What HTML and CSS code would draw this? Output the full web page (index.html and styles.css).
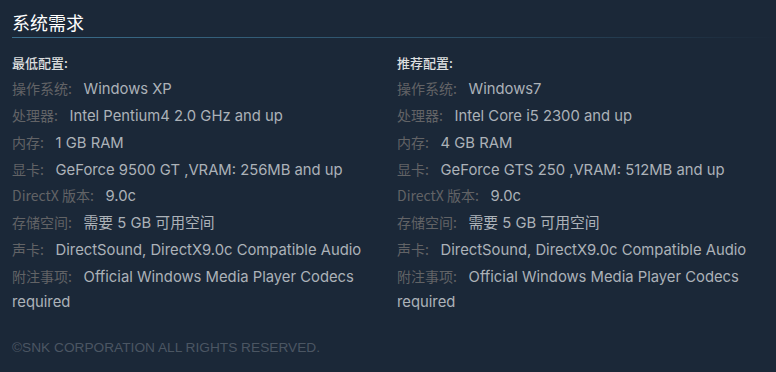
FILE: index.html
```html
<!DOCTYPE html>
<html lang="zh-CN">
<head>
<meta charset="utf-8">
<link rel="stylesheet" href="styles.css">
</head>
<body>
<div class="page">
  <h2 class="title">系统需求</h2>
  <div class="sysreq">
    <div class="col">
      <ul class="req-list">
        <li class="head">最低配置:</li>
        <li><span class="lbl">操作系统:</span> Windows XP</li>
        <li><span class="lbl">处理器:</span> Intel Pentium4 2.0 GHz and up</li>
        <li><span class="lbl">内存:</span> 1 GB RAM</li>
        <li><span class="lbl">显卡:</span> GeForce 9500 GT ,VRAM: 256MB and up</li>
        <li><span class="lbl">DirectX 版本:</span> 9.0c</li>
        <li><span class="lbl">存储空间:</span> 需要 5 GB 可用空间</li>
        <li><span class="lbl">声卡:</span> DirectSound, DirectX9.0c Compatible Audio</li>
        <li><span class="lbl">附注事项:</span> Official Windows Media Player Codecs required</li>
      </ul>
    </div>
    <div class="col">
      <ul class="req-list">
        <li class="head">推荐配置:</li>
        <li><span class="lbl">操作系统:</span> Windows7</li>
        <li><span class="lbl">处理器:</span> Intel Core i5 2300 and up</li>
        <li><span class="lbl">内存:</span> 4 GB RAM</li>
        <li><span class="lbl">显卡:</span> GeForce GTS 250 ,VRAM: 512MB and up</li>
        <li><span class="lbl">DirectX 版本:</span> 9.0c</li>
        <li><span class="lbl">存储空间:</span> 需要 5 GB 可用空间</li>
        <li><span class="lbl">声卡:</span> DirectSound, DirectX9.0c Compatible Audio</li>
        <li><span class="lbl">附注事项:</span> Official Windows Media Player Codecs required</li>
      </ul>
    </div>
  </div>
  <p class="legal">©SNK CORPORATION ALL RIGHTS RESERVED.</p>
</div>
</body>
</html>
```
FILE: styles.css
```css
html, body {
  margin: 0;
  padding: 0;
  background: #1b2838;
}
body {
  font-family: Inter, "Noto Sans CJK SC", sans-serif;
  color: #acb2b8;
}
.page {
  padding-left: 12px;
  padding-top: 10px;
}
.title {
  margin: 0;
  font-family: "Noto Sans CJK SC", sans-serif;
  font-size: 18px;
  font-weight: normal;
  line-height: 24px;
  color: #ffffff;
  padding-bottom: 3px;
  border-bottom: 1px solid transparent;
  border-image: linear-gradient(90deg, #3b6e8c 0%, #2c4d64 60%, rgba(59,110,140,0) 100%) 1;
}
.sysreq {
  width: 740px;
  display: grid;
  grid-template-columns: 355px 355px;
  column-gap: 30px;
  margin-top: 12px;
}
.req-list {
  list-style: none;
  margin: 0;
  padding: 0;
  font-size: 14.8px;
  line-height: 25px;
}
.req-list li {
  margin-bottom: 1.9px;
}
.req-list .head {
  font-family: "Noto Sans CJK SC", sans-serif;
  font-size: 13px;
  font-weight: 500;
  color: #dcdedf;
}
.lbl {
  font-family: "Noto Sans CJK SC", sans-serif;
  font-size: 14px;
  line-height: 1;
  color: #626366;
  margin-right: 7.5px;
}
.legal {
  margin: 23px 0 0;
  font-family: "Liberation Sans", Arial, sans-serif;
  font-size: 13.7px;
  color: #4b5663;
}
```
